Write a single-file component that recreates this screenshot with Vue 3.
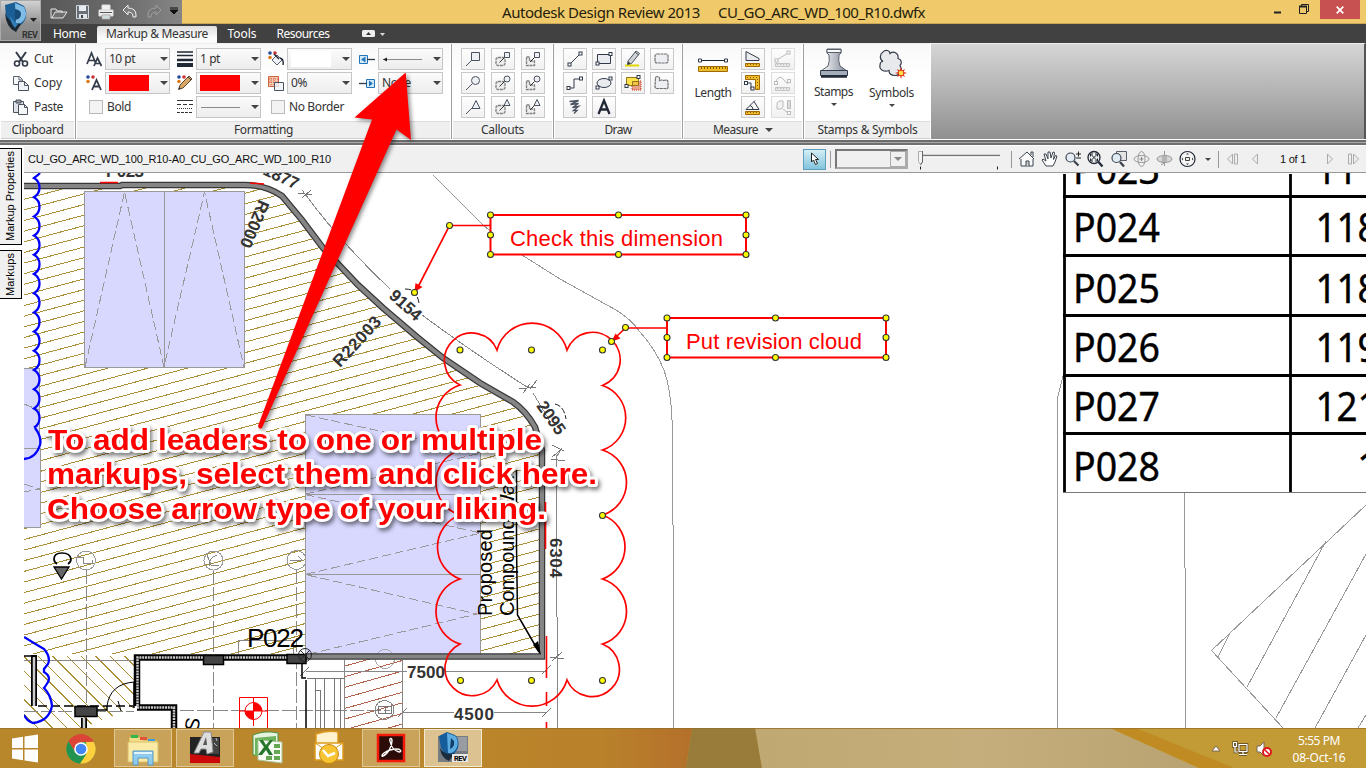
<script setup>
const vFit = {
  mounted(el, { value }) {
    const width = el.getBoundingClientRect().width
    const gaps = Math.max(1, el.textContent.trim().length)
    el.style.letterSpacing = ((value - width) / gaps).toFixed(3) + 'px'
  }
}

const quick = [
  '<path d="M1 5h5l1 2h5v2M1 5v9h12l4-6H5l-3 6" fill="#6f6f6f" stroke="#e4e4e4"/>',
  '<path d="M2.500 1.500h12v13h-12z" fill="#6b6f77" stroke="#d0d6dd"/><path d="M5 2h7v5H5z" fill="#e8edf2"/><path d="M5 10h8v4H5z" fill="#dfe5ea"/><path d="M7 11h2v3H7z" fill="#444"/>',
  '<path d="M4 1h8v5H4zM1 6h14v6H1z" fill="#f0f0f0" stroke="#ddd"/><path d="M2 8h12v1H2z" fill="#555"/><path d="M4 11h8v4H4z" fill="#fff" stroke="#999"/><path d="M5 13h6" stroke="#9bb"/>',
  '<path d="M1 6l5-5v3q8 0 8 7v2h-3q0-5-5-5v3z" fill="#7c7c7c" stroke="#eee"/>',
  '<path d="M15 6l-5-5v3q-8 0-8 7v2h3q0-5 5-5v3z" fill="#777" stroke="#a0a0a0"/>'
]

const clipboard = [
  { label: 'Cut', w: 19, icon: '<path d="M3 1l7 10M13 1L6 11" stroke="#333b4a" stroke-width="2" fill="none"/><circle cx="4" cy="12.500" r="2.500" fill="none" stroke="#333b4a" stroke-width="1.600"/><circle cx="12" cy="12.500" r="2.500" fill="none" stroke="#333b4a" stroke-width="1.600"/>' },
  { label: 'Copy', w: 28, icon: '<path d="M.5 1.500h6l3 3v5h-9z" fill="#f6f8fa" stroke="#5a6270"/><path d="M6 2v3h3" fill="none" stroke="#5a6270"/><path d="M5.500 6.500h6l4 4v5h-10z" fill="#eef1f5" stroke="#4b5361"/><path d="M11.500 6.500v4h4" fill="none" stroke="#4b5361"/>' },
  { label: 'Paste', w: 29, icon: '<path d="M.5 2.500h10v11H.5z" fill="#dfe3e8" stroke="#4b5361"/><path d="M3 1h5v3H3z" fill="#999" stroke="#4b5361"/><path d="M5.500 5.500h6l3 3v7h-9z" fill="#f4f6f8" stroke="#4b5361"/><path d="M11.500 5.500v3h3" fill="none" stroke="#4b5361"/>' }
]

const swatch = '<circle cx="2" cy="2" r="1.800" fill="#214a9a"/><circle cx="7" cy="2" r="1.800" fill="#c33"/><circle cx="2" cy="6.500" r="1.800" fill="#e07818"/>'
const fmtIcons = {
  size: '<path d="M1 13L5.500 2 10 13M2.500 9.500h6M8 15l3.500-8L15.500 15M9 12.500h5" fill="none" stroke="#333b4a" stroke-width="1.700"/>',
  color: swatch + '<path d="M6 15l4.500-10L15 15M7.500 11.500h6" fill="none" stroke="#333b4a" stroke-width="1.800"/>',
  weight: '<path d="M0 1h16M0 4.500h16" stroke="#222936" stroke-width="1.300"/><path d="M0 9h16" stroke="#222936" stroke-width="2.500"/><path d="M0 14h16" stroke="#222936" stroke-width="4"/>',
  pen: swatch + '<path d="M2 14l1-4 9-9 3 3-9 9z" fill="#d9a866" stroke="#5b4632"/><path d="M11 2l3 3" stroke="#444"/><path d="M1 15l1-3 2 2z" fill="#333"/>',
  dash: '<path d="M0 1.500h16" stroke="#333"/><path d="M0 5.500h16" stroke="#333" stroke-dasharray="4 2"/><path d="M0 9.500h16" stroke="#333" stroke-dasharray="1 1"/><path d="M0 13.500h16" stroke="#333" stroke-dasharray="3 1"/>',
  bucket: swatch + '<path d="M4 9l5-5 5 5-5 5z" fill="#edf0f4" stroke="#59606c"/><path d="M6 3l5 5M12 7q4 1 3 7" fill="none" stroke="#222936" stroke-width="1.400"/>',
  opacity: '<path d="M.5 1.500h10v10H.5z" fill="#f6c8b4" stroke="#d0623a"/><path d="M3 1v11M6 1v11M1 4h10M1 7h10" stroke="#d0623a" stroke-dasharray="1 1"/><path d="M6.500 7.500h9v8h-9z" fill="#eef1f6" fill-opacity=".8" stroke="#4b5361"/>',
  start: '<path d="M.5 4.500h8v8h-8z" fill="#d3eafa" stroke="#2474b8"/><path d="M8 8.500h8" stroke="#333b4a" stroke-width="1.300"/><path d="M6.500 5.500v6L2 8.500z" fill="#2474b8"/>',
  end: '<path d="M7.500 4.500h8v8h-8z" fill="#d3eafa" stroke="#2474b8"/><path d="M0 8.500h8" stroke="#333b4a" stroke-width="1.300"/><path d="M10 5.500v6l4-3z" fill="#2474b8"/>'
}
const formatting = [
  { icon: 'size', text: '10 pt', w: 26 }, { icon: 'weight', text: '1 pt', w: 20 }, { icon: 'bucket', fill: 'white' }, { icon: 'start', kind: 'arrow' },
  { icon: 'color', fill: 'red' }, { icon: 'pen', fill: 'red' }, { icon: 'opacity', text: '0%', w: 16 }, { icon: 'end', text: 'None', w: 29 },
  { check: 'Bold', w: 24 }, { icon: 'dash', kind: 'line' }, { check: 'No Border', w: 55 }
]

const heads = [
  ['<path d="M10.500 4.500h8v8h-8z" ', '<path d="M13.500 4.500h5v5h-5z" '],
  ['<circle cx="14.500" cy="8.500" r="4" ', '<circle cx="16" cy="7" r="3" '],
  ['<path d="M15 4.500l4 8h-8z" ', '<path d="M16 3.500l3 6h-6z" ']
]
const ink = 'fill="#eef0f4" stroke="#4b5361"/>'
const callouts = heads.flatMap(([big, small]) => [
  big + ink + '<path d="M5 18l6-6" stroke="#4b5361"/>',
  '<rect x="5" y="9.500" width="9" height="8" rx="2" fill="#eee" stroke="#808080" stroke-width="1.300" stroke-dasharray="3 .7"/>' + small + ink + '<path d="M8.500 14.500l5-5" stroke="#333"/>',
  '<path d="M5.500 9h3v4l5 0v4.500h-8z" fill="#eee" stroke="#808080" stroke-width="1.300" stroke-dasharray="3 .7"/>' + small + ink + '<path d="M9 14l4.500-4.500" stroke="#333"/>'
])
const node = (x, y, c = '#333b4a') => `<rect x="${x - 1.5}" y="${y - 1.5}" width="3" height="3" fill="#fff" stroke="${c}"/>`
const draw = [
  '<path d="M7 16L17 6" stroke="#333b4a"/>' + node(6.5, 16.5) + node(17.5, 5.5),
  '<path d="M5.500 6.500h13v9h-13z" fill="#e9ebef" stroke="#333b4a"/>' + node(5.5, 15.5) + node(18.5, 6),
  '<path d="M4 17.500h14" stroke="#e3d700" stroke-width="2"/><path d="M7 13l8-10 3.500 2.500-8 10-4 1z" fill="#cfd3d6" stroke="#4b5361"/><path d="M14 4l3.500 3" stroke="#4b5361"/><path d="M6.500 16.500l1-3 2 2z" fill="#333"/>',
  '<rect x="5" y="6" width="13" height="9" rx="2" fill="#eceef1" stroke="#707070" stroke-width="1.200" stroke-dasharray="3 .5"/>',
  '<path d="M6 16h5V7h7" fill="none" stroke="#333b4a"/>' + node(5.5, 16) + node(18, 6.5),
  '<ellipse cx="12" cy="11" rx="7" ry="4.500" fill="#e9ebef" stroke="#333b4a"/>' + node(5.5, 15.5) + node(18.5, 6.5),
  '<path d="M11 9h9v9h-9z" fill="#e9a08d" stroke="#c0321c" stroke-dasharray="1 1"/><path d="M5.500 5.500h12v8h-12z" fill="#ffe14a" stroke="#8f7418"/><path d="M11.500 9.500h6v4h-6z" fill="#f8c04a" stroke="#8f7418"/>' + node(5.5, 14) + node(17.5, 5),
  '<path d="M5.500 6q0-1.500 2-1.500t2 2v2q2-1 4 0 4-1 4.500 1v6q-1 2-3 1h-8q-2 0-2-2z" fill="#eceef1" stroke="#707070" stroke-width="1.200" stroke-dasharray="3 .5"/>',
  '<path d="M6.500 5.500l9-1-8 4 8-1-6 4 6-1-5 4 3.500 0-3 3" fill="none" stroke="#4b5361" stroke-width="1.400"/>',
  '<path d="M6.500 18L12 4.500 17.500 18M8.500 13.500h7" fill="none" stroke="#222936" stroke-width="2.300"/>'
]
const ruler = (dim) => `<path d="M4.500 15.500h14v3h-14z" fill="${dim ? '#e6e6e6' : '#f0bd2a'}" stroke="${dim ? '#c4c4c4' : '#a06a00'}"/><path d="M6 16.500h11" stroke="${dim ? '#bbb' : '#8a5a00'}" stroke-dasharray="1 2"/>`
const measure = [
  { svg: '<path d="M5 3.500l13 7v2H5z" fill="#e9ebef" stroke="#333b4a"/>' + ruler() },
  { svg: '<path d="M6 12l11-7" stroke="#bbb"/>' + node(5.5, 12.5, '#bbb') + node(17.5, 4.5, '#bbb') + ruler(1), off: true },
  { svg: '<path d="M4.500 3.500h14v14h-4v-10h-10z" fill="#f0bd2a" stroke="#a06a00"/><path d="M6 5.500h10.500v11" stroke="#8a5a00" stroke-dasharray="1 2" fill="none"/><path d="M5 11h5v6" fill="none" stroke="#333b4a"/>' + node(5, 11) + node(11.5, 16.5) },
  { svg: '<path d="M5 9q4-7 8-1t6 1" fill="none" stroke="#bbb"/>' + node(5, 11, '#bbb') + node(18, 9, '#bbb') + ruler(1), off: true },
  { svg: '<path d="M5 13.500L14 4.500" stroke="#333b4a"/><path d="M5 13.500h13L13 5.500M9 9.500q3 1 3 4" fill="none" stroke="#333b4a"/>' + ruler() },
  { svg: '<path d="M6 7l2-2h4v6l-2 2H6z" fill="#f3f3f3" stroke="#bbb"/><path d="M16.500 4.500h3v8h-3z" fill="#ddd" stroke="#bbb"/><path d="M12 13l5 4" stroke="#bbb"/>' + node(18, 17, '#bbb'), off: true }
]

const nav = [
  '<path d="M1 9l8-7 7 7M3 9v7h12V9M13 5V2h2v5" fill="#fafafa" stroke="#3b4250"/><path d="M8 16v-5h3v5" fill="#ccc" stroke="#3b4250"/>',
  '<path d="M5 16l-4-6 1-1 3 2-2-7 2 0 2 5 0-7 2 0 1 6 2-6 1.500.5-1 7 2-4 1.500.5-2 6-2 4z" fill="#fff" stroke="#3b4250"/>',
  '<circle cx="6.500" cy="7.500" r="4.500" fill="#e4edf3" stroke="#3b4250" stroke-width="1.200"/><path d="M10 11l4.500 4.500" stroke="#3b4250" stroke-width="2.200"/><path d="M12 4h5M14.500 1.500v5M12 8h5" stroke="#222"/>',
  '<circle cx="7" cy="7.500" r="6" fill="#eee" stroke="#222936" stroke-width="1.300"/><path d="M4 4.500l6 6M10 4.500l-6 6M3.500 6.500v-2.500h2.500M10.500 6.500v-2.500H8M3.500 8.500V11H6M10.500 8.500V11H8" stroke="#222936" fill="none"/><path d="M11.500 12l4 4.500" stroke="#222936" stroke-width="2.300"/>',
  '<path d="M6.500 1.500h10v9h-10z" fill="#e4e4e4" stroke="#59606c"/><circle cx="6.500" cy="8" r="4.500" fill="#dfeaf2" stroke="#3b4250" stroke-width="1.200"/><path d="M10 12l4 4.500" stroke="#3b4250" stroke-width="2.300"/>',
  '<ellipse cx="8.500" cy="9" rx="7.500" ry="3.500" fill="none" stroke="#999"/><ellipse cx="8.500" cy="9" rx="3.500" ry="7.500" fill="none" stroke="#999"/><path d="M8.500 7v4M6.500 9h4" stroke="#888"/>',
  '<ellipse cx="8.500" cy="9" rx="7.500" ry="3.500" fill="#d6d6d6" stroke="#999"/><path d="M8.500 1v15M5 11.500l3 1.500-3 2" fill="none" stroke="#999"/><path d="M6 6h5v6H6z" fill="#b5b5b5"/>',
  '<circle cx="8.500" cy="9" r="7.500" fill="#f5f5f5" stroke="#222936" stroke-width="1.200"/><path d="M6.500 7.500h4v3h-4z" fill="#eee" stroke="#444"/><path d="M8.500 3l1.500 1.500h-3zM8.500 15l1.500-1.500h-3zM2.500 9L4 7.500v3zM14.500 9L13 7.500v3z" fill="#444"/>'
]

// Diagonal hatch lines, one per step, running up to the right at 15 degrees.
const slope = Math.tan(Math.PI / 12)
const hatch = Array.from({ length: 56 }, (_, i) => {
  const y = 199.3 + i * 10.63
  return `M24 ${y.toFixed(1)}L564 ${(y - 540 * slope).toFixed(1)}`
}).join('')
const steep = Array.from({ length: 13 }, (_, i) => `M${-40 + i * 14.4} 650l84 84`).join('')
const brick = Array.from({ length: 11 }, (_, i) => `M345 ${666 + i * 10.6}l57-16`).join('')
const squiggle = 'M40 173l-2 2-4 3' + Array.from({ length: 13 }, () => 'q5.500 3 5.500 9.500t-5.500 9.700').join('')
const dots = [[460, 350], [531.5, 350], [602.5, 350], [602.5, 515.5], [460.5, 680.5], [531.5, 680.5], [602.5, 680.5], [611.5, 341.5], [625.5, 327.5],
  [449.5, 225.5], [414.5, 292.5], [490.5, 215], [618.5, 215], [746, 215], [490.5, 235], [746, 235], [490.5, 254.5], [618.5, 254.5], [746, 254.5],
  [667, 318], [775.5, 318], [886, 318], [667, 337.5], [886, 337.5], [667, 357.5], [775.5, 357.5], [886, 357.5]]
const rows = [['P023', '111', 184], ['P024', '118', 242], ['P025', '118', 302.5], ['P026', '119', 362], ['P027', '121', 420.5], ['P028', '', 481]]

const tasks = [
  { svg: '<path d="M3 9.500l11-1.700V19H3zM15.500 7.600L29 5.500V19H15.500zM3 20.500h11v10.700L3 29.500zM15.500 20.500H29V33.500L15.500 31.400z" fill="#fff"/>' },
  { svg: '<circle cx="16" cy="20" r="14.500" fill="#4caf50"/><path d="M3.500 12.500A14.500 14.500 0 0 1 28.600 12.700L16 13z" fill="#db4437"/><path d="M3.500 12.500A14.500 14.500 0 0 1 28.600 12.700H16l-6 10z" fill="#db4437"/><path d="M28.600 12.700A14.500 14.500 0 0 1 15 34.500l7-11-1-10.500z" fill="#fdd13e"/><path d="M3.500 12.500A14.500 14.500 0 0 0 15 34.500l6-9-11-2z" fill="#239450"/><circle cx="16" cy="20" r="6.800" fill="#fff"/><circle cx="16" cy="20" r="5.300" fill="#4285f4"/>' },
  { frame: 1, svg: '<path d="M2 8h12l2 3h14v22H2z" fill="#f2dc86" stroke="#c8a94e"/><path d="M4 6h7v3H4z" fill="#32b64a"/><path d="M13 8h7v3h-7z" fill="#e1543a"/><path d="M21 10h7v2h-7z" fill="#3c9de0"/><path d="M1 13h30v20H1z" fill="#f9eaa5" stroke="#d9bf68"/><path d="M6 36V22h20v14h-5v-7H11v7z" fill="#8fcbed" stroke="#5799c4"/><path d="M7 24h18" stroke="#e2f5ff" stroke-width="2"/>' },
  { frame: 1, svg: '<path d="M1 8h30v26H1z" fill="#222"/><path d="M1 25l30 3v6H1z" fill="#cc0a0a"/><path d="M18 9h12v16H18z" fill="#444"/><path d="M20 10l2 2M25 14l3 3M21 18l3-3M27 9l1 3" stroke="#bbb"/><path d="M5 24L15 3h7l2 20-6 2-1-5h-5l-2 4z" fill="#ddd" stroke="#888"/><path d="M14 16l3-8 1 8z" fill="#555"/>' },
  { svg: '<path d="M2 6q12-5 25-2v22H2z" fill="#e6f3df" stroke="#4a9442"/><path d="M4 9l21-2v20H4z" fill="#6db35c"/><path d="M7 11l24 2v21L7 31z" fill="#f8fcf5" stroke="#a9c79e"/><path d="M23 15h6v4h-6zM23 21h6v4h-6zM23 27h6v4h-6zM15 27h6v4h-6z" fill="#67a653"/><path d="M8 11h4l3 5 4-5h3l-5 7 5 8h-4l-3-5-4 5H7l6-8z" fill="#25762a"/>' },
  { svg: '<path d="M3 5q12-4 22-2v22H3z" fill="#fff2cf" stroke="#dd9a1d" stroke-width="1.500"/><path d="M2 14h28v17H2z" fill="#fff" stroke="#dd9a1d" stroke-width="1.500"/><path d="M2 14l14 9 14-9" fill="none" stroke="#dd9a1d"/><circle cx="16" cy="25" r="9.500" fill="#f8c432" stroke="#c9880e"/><path d="M10 21l5 6 7-3" fill="none" stroke="#fff" stroke-width="2.500"/>' },
  { frame: 1, svg: '<path d="M3 6h26v26H3z" fill="#2b0c08" stroke="#f51b0c" stroke-width="2.500"/><path d="M8 27c5-2 9-10 9-15 0-4-3-3-2 0 1 6 5 10 9 11 3 0 2-3-2-3-5 0-10 2-13 4-3 2-2 4-1 3z" fill="none" stroke="#fff" stroke-width="1.400"/>' },
  { frame: 2, svg: '<path d="M1 7h30v26H1z" fill="#777c82"/><path d="M18 8h12v14H18z" fill="#999da1"/><path d="M2 7l8-4 8 3q5 4 3 13-4 9-12 7L4 19z" fill="#155d9b"/><path d="M10 4l8 3q4 4 2 11-3 7-9 6z" fill="#5caee2"/><path d="M14 9l-1 11q5-2 4-8z" fill="#123f69"/><path d="M3 19q5 8 15 5l-6 8q-8-3-9-13z" fill="#1c2c3c"/><path d="M15 25h16v8H15z" fill="#e8e8e8"/>', rev: 1 }
]
</script>

<template>
  <div class="page">
    <header class="title">
      <div class="appbtn">
        <svg width="41" height="41" viewBox="0 0 41 41"><path d="M5 5l11-3 8 4q4 7 1 14-5 9-15 6L6 17z" fill="#1b5f96"/><path d="M15 3l9 4q4 7 0 13-3 4-8 4z" fill="#7fbde6"/><path d="M15 9v11q6-1 6-6 0-4-6-5z" fill="#184a76"/><path d="M5 13q3 10 16 11l-5 8Q6 28 5 13z" fill="#1b2733"/><path d="M10 15q2 6 8 9l-3 4q-5-5-5-13z" fill="#347fb8"/><path d="M30 18h7l-3.500 4z" fill="#222"/><text x="22" y="37.500" font-family="Roboto" font-size="9" font-weight="700" fill="#333" textLength="16">REV</text></svg>
      </div>
      <div class="quick">
        <svg v-for="(q, i) in quick" :key="i" width="18" height="16" viewBox="0 0 18 16" v-html="q" />
        <svg width="8" height="8" viewBox="0 0 8 8"><path d="M0 1h8M0 3h8l-4 4z" stroke="#111" fill="#111"/></svg>
      </div>
      <div class="caption">
        <span v-fit="198">Autodesk Design Review 2013</span>
        <span v-fit="207">CU_GO_ARC_WD_100_R10.dwfx</span>
      </div>
      <div class="winbtns">
        <svg width="70" height="20" viewBox="0 0 70 20"><path d="M4 12.500h7" stroke="#222" stroke-width="2"/><path d="M29.500 6.500h7v7h-7zM31.500 6V4.500h7v7H37" fill="none" stroke="#222"/><path d="M29 6.500h8" stroke="#222" stroke-width="2"/></svg>
        <div class="close"><svg width="8" height="8" viewBox="0 0 8 8"><path d="M.7.700l6.600 6.600M7.300.7L.7 7.300" stroke="#fff" stroke-width="1.700"/></svg></div>
      </div>
    </header>
    <nav class="tabs">
      <span v-fit="33" class="t1">Home</span>
      <div class="active"><span v-fit="102">Markup &amp; Measure</span></div>
      <span v-fit="29" class="t3">Tools</span>
      <span v-fit="53" class="t4">Resources</span>
      <svg width="24" height="8" viewBox="0 0 24 8"><rect width="13" height="7" rx="1.500" fill="#eee"/><path d="M4 5l2.500-3L9 5z" fill="#333"/><path d="M18 3h5l-2.500 3z" fill="#ddd"/></svg>
    </nav>
    <section class="ribbon">
      <div class="panel clip">
        <div class="body">
          <div v-for="c in clipboard" :key="c.label" class="cliprow"><svg width="16" height="16" viewBox="0 0 16 16" v-html="c.icon" /><span v-fit="c.w">{{ c.label }}</span></div>
        </div>
        <footer><span v-fit="52">Clipboard</span></footer>
      </div>
      <div class="panel fmt">
        <div class="body">
          <div v-for="(f, i) in formatting" :key="i" class="cell">
            <template v-if="f.check"><i class="box" /><span v-fit="f.w">{{ f.check }}</span></template>
            <template v-else>
              <svg width="16" height="16" viewBox="0 0 16 16" v-html="fmtIcons[f.icon]" />
              <div class="combo">
                <span v-if="f.text" v-fit="f.w">{{ f.text }}</span>
                <i v-if="f.fill" class="fill" :class="f.fill" />
                <svg v-if="f.kind" width="42" height="9" viewBox="0 0 42 9"><path d="M1 4.500h39" stroke="#8a8a8a"/><path v-if="f.kind === 'arrow'" d="M1 4.500l4-2v4z" fill="#222"/></svg>
                <b class="tri" />
              </div>
            </template>
          </div>
        </div>
        <footer><span v-fit="59">Formatting</span></footer>
      </div>
      <div class="panel call">
        <div class="body grid3"><button v-for="(c, i) in callouts" :key="i"><svg width="22" height="20" viewBox="1 1 22 20" v-html="c" /></button></div>
        <footer><span v-fit="43">Callouts</span></footer>
      </div>
      <div class="panel drw">
        <div class="body grid4"><button v-for="(c, i) in draw" :key="i"><svg width="22" height="20" viewBox="1 1 22 20" v-html="c" /></button></div>
        <footer><span v-fit="27">Draw</span></footer>
      </div>
      <div class="panel meas">
        <div class="body split">
          <div class="big len"><svg width="30" height="32" viewBox="0 0 30 32"><path d="M2 12.500h26" stroke="#222936"/><path d="M.5 11h3v3h-3zM26.500 11h3v3h-3z" fill="#fff" stroke="#333b4a"/><path d="M.5 18.500h29v5H.5z" fill="#f0bd2a" stroke="#a06a00"/><path d="M3 20h25" stroke="#8a5a00" stroke-width="2" stroke-dasharray="1 2"/></svg><span v-fit="37">Length</span></div>
          <div class="grid2"><button v-for="(m, i) in measure" :key="i" :class="{ off: m.off }"><svg width="22" height="20" viewBox="1 1 22 20" v-html="m.svg" /></button></div>
        </div>
        <footer><span v-fit="45">Measure</span><b class="tri" /></footer>
      </div>
      <div class="panel stm">
        <div class="body split">
          <div class="big"><svg width="32" height="36" viewBox="0 0 32 36"><defs><linearGradient id="metal"><stop stop-color="#fff"/><stop offset="1" stop-color="#7d8595"/></linearGradient></defs><path d="M9 5h14v4l-2 2q-1 6 1 11l7 5v5H3v-5l7-5q2-5 1-11L9 9z" fill="url(#metal)" stroke="#59606c"/><path d="M9 5.500h14v3H9z" fill="#fafafa" stroke="#59606c"/><path d="M2.500 26.500h27v5h-27z" fill="#a6adba" stroke="#333b4a"/><path d="M3 32.500h26" stroke="#222936" stroke-width="2.500"/></svg><span v-fit="39">Stamps</span><b class="tri sm" /></div>
          <div class="big sym"><svg width="36" height="36" viewBox="0 0 36 36"><path d="M9 8c2-2.500 7-2 7 1.500 4-3 9 0 8 5 4 1 4 5 2 7 3 5 0 10-5 10-4 0-6-2-6-5-5 2-10-1-9-5 0-3 1-4 3-4-4-2-3-8 0-9.500z" fill="#e7e9ed" stroke="#333b4a" stroke-width="1.200"/><path d="M27 23l1 3.500 3-1.500-1.500 3 3.500 1-3.500 1 1.500 3-3-1.500-1 3.500-1-3.500-3 1.500 1.500-3-3.500-1 3.500-1-1.500-3 3 1.500z" fill="#e02608"/><circle cx="27" cy="29" r="2.300" fill="#ffe24a"/></svg><span v-fit="45">Symbols</span><b class="tri sm" /></div>
        </div>
        <footer><span v-fit="100">Stamps &amp; Symbols</span></footer>
      </div>
    </section>
    <div class="rule" />
    <main class="work">
      <aside>
        <div class="vtab a"><svg width="19" height="94" viewBox="0 0 19 94"><text transform="translate(14 92) rotate(-90)" textLength="90">Markup Properties</text></svg></div>
        <div class="vtab b"><svg width="19" height="47" viewBox="0 0 19 47"><text transform="translate(14 45) rotate(-90)" textLength="43">Markups</text></svg></div>
      </aside>
      <div class="doc">
        <div class="docbar">
          <span v-fit="303" class="docname">CU_GO_ARC_WD_100_R10-A0_CU_GO_ARC_WD_100_R10</span>
          <div class="ptr"><svg width="10" height="14" viewBox="0 0 10 14"><path d="M1.500 1v9l2-2 2 4.500 2-1L5.500 7.500h3z" fill="#fff" stroke="#222"/></svg></div>
          <i class="sep" />
          <div class="select"><div><b class="tri gr" /></div></div>
          <svg class="slider" width="84" height="22" viewBox="0 0 84 22"><path d="M3 7.500h80" stroke="#777" stroke-width="1.500"/><path d="M3 9h80" stroke="#fff"/><path d="M1.500 3.500h4v10l-2 3-2-3z" fill="#f6f6f6" stroke="#aaa"/><path d="M5.500 3v11l-2 3" fill="none" stroke="#666"/><path d="M3.500 18.500v3M80.500 18.500v3" stroke="#222"/></svg>
          <i class="sep s2" />
          <div class="nav"><svg v-for="(n, i) in nav" :key="i" width="18" height="18" viewBox="0 0 18 18" v-html="n" /></div>
          <b class="tri sm dk" />
          <i class="sep s3" />
          <svg class="pg" width="34" height="12" viewBox="0 0 34 12"><path d="M6.500 1v10l-5-5zM8.500 1h3v10h-3zM31.500 1v10l-5-5z" fill="#eee" stroke="#aaa"/></svg>
          <span v-fit="26" class="of">1 of 1</span>
          <svg class="pg" width="34" height="12" viewBox="0 0 34 12"><path d="M1.500 1v10l5-5zM22.500 1h3v10h-3zM27.500 1v10l5-5z" fill="#eee" stroke="#aaa"/></svg>
        </div>
        <svg class="plan" width="1342" height="555" viewBox="24 173 1342 555">
          <defs>
            <clipPath id="yard"><path d="M24 188H245q22-1 38 10L306 228 360 289 383 311 417 340 443 361 480 386 512 405 532 426 540 452V654H24z"/></clipPath>
            <clipPath id="porch"><path d="M24 656H134V708L82 728H24z"/></clipPath>
            <clipPath id="strip"><path d="M345 659h57v70h-57z"/></clipPath>
          </defs>
          <g shape-rendering="crispEdges" fill="none">
            <path clip-path="url(#yard)" :d="hatch" stroke="#ac9038"/>
            <path clip-path="url(#porch)" :d="steep" stroke="#ac9038"/>
            <path clip-path="url(#strip)" :d="brick" stroke="#b5654d"/>
            <path d="M84.500 191.500h160v176h-160zM24 368.500h15v80h1v79H24M305.500 414.500h175V654h-175z" fill="#d8d8ff" stroke="#999"/>
            <path d="M164.500 192v175M305 494.500h176M305 574.500h176M24 448.500h15" stroke="#999"/>
            <path d="M85 367L124.500 192 164 367 204.500 192 244 367M306 415l175 38-175 41M305 494.500L481 533 305 574.500 477 614 305 655M24 404l15 6M24 484l16 5-16 3" stroke="#999" stroke-dasharray="9 4"/>
            <path d="M433 175L482 224Q500 241 522 255L560 279 616 310Q632 320 640 332 656 350 664 370 671 390 672 420V525M673 525V728M1063 376l-5 20-1 15V728M1184.500 493V568M1185.500 568V728M1366 505L1211.500 650.500 1283 728M1230 633l-12 24M1326 541L1247 687M1366 554L1276 718M1366 635L1315 728M1366 715l-8 13" stroke="#999"/>
            <path d="M302 190Q340 242 390 289M422 315Q472 352 527 387M533 393l18 30M562 448L556 458M556 455V617M557 617V728M306 671H407M445 671H547M402 713L455 712M494 712H547M238 654V640h55v14M402 660V728M344.500 660V728M24 660H134M306 672" stroke="#888"/>
            <path d="M86 570V728M213.500 570V728M296.500 570V728M180 710.500H390M24 711H134" stroke="#888" stroke-dasharray="14 3"/>
            <path d="M298 193l14 2M302 198l9-8M519 389l17-2M523 393l7-9M530 389l7-9M552 457l10-8M551 459l14 2M552 445l12 6M550 657l14 2M552 661l10-9M542 674l9-9M542 717l9-9M398 717l9-9M300 676l9-9" stroke="#777"/>
            <path d="M307 678h38M315 678v50M324.500 678v50M334.500 678v50M340 678v50M316 690h4v38" stroke="#777"/>
            <circle cx="86" cy="560.500" r="9.500" stroke="#999"/><circle cx="213.500" cy="560.500" r="9.500" stroke="#999"/><circle cx="296.500" cy="560" r="9.500" stroke="#999"/>
            <circle cx="385" cy="659" r="9.500" stroke="#aaa"/><circle cx="384.500" cy="710" r="9.500" stroke="#888"/><path d="M378.500 706h13v7h-13zM385 706v7" stroke="#777"/>
            <path d="M209 566q0-8 8-11M207 555l4 10h8M76 557h7v6h9v-3M290 560h12l-4-4" stroke="#888"/>
          </g>
          <g fill="none">
            <path d="M24 186H120L122 185H245Q266 185 282 196L302 220 323 248 358 285 383 308 417 337 443 358 480 383 513 402Q526 411 535 427L542 450V656.500H305" stroke="#383838" stroke-width="6.500"/>
            <path d="M24 186H120L122 185H245Q266 185 282 196L302 220 323 248 358 285 383 308 417 337 443 358 480 383 513 402Q526 411 535 427L542 450V656.500H305" stroke="#858585" stroke-width="4"/>
            <path d="M100 182.500h18M250 183l14 1M545.500 502v47M546.500 636v42M546.500 692v14M546.500 722v6" stroke="red" stroke-width="1.600"/>
            <path d="M137 706V657.500H302M137 707.500H174V728" stroke="#000" stroke-width="6.500"/>
            <path d="M137.500 706V657.500H302M137 707.500H174V728" stroke="#ccc" stroke-width="2.500" stroke-dasharray="2 .8"/>
            <path d="M34 655V706M84 718V728" stroke="#000" stroke-width="6"/><path d="M34 657V706M84 718V728" stroke="#ccc" stroke-width="2.500"/>
            <path d="M24 656h12M38 706H134" stroke="#000" stroke-width="1.500" stroke-dasharray="9 4"/>
            <path d="M203.500 655.500h20v9h-20zM287 654.500h19v9h-19zM75 706.500h22v10H75z" fill="#444" stroke="#000" stroke-width="1.500"/>
            <path d="M97 710h10v-4M134 682v26M302 664v14h4M306 680V728" stroke="#000" stroke-width="1.500"/><path d="M107 706q3-22 27-24M118 701l3 10" stroke="#000"/>
            <circle cx="305" cy="655" r="6.500" stroke="#222"/><path d="M300 650l10 10M310 650l-10 10" stroke="#222"/>
            <path d="M239.500 697.500h28v34h-28z" stroke="red"/><circle cx="253.500" cy="711" r="8.500" fill="#fff" stroke="red"/><path d="M253.500 711v-8.500a8.500 8.500 0 0 1 8.500 8.500zM253.500 711v8.500a8.500 8.500 0 0 1-8.500-8.500z" fill="red"/><path d="M240 711h27M253.500 698v28" stroke="red"/>
            <path d="M57 564q-3-2-3-5 0-6 8-6t9 6q0 3-3 5" stroke="#000" stroke-width="1.700"/><path d="M54 567h15l-7.500 12z" fill="#666" stroke="#000" stroke-width="1.300"/>
            <path d="M516.500 470V545L517.500 615 539 652" stroke="#000" stroke-width="1.500"/><path d="M541 655l-8-10 5-4z" fill="#000"/>
            <path :d="squiggle" stroke="#00f" stroke-width="2.300"/><path d="M35 428q7 9 5 17-4 13-16 14M24 637q11 7 20 12 7 8 4 15l-4 5 0 3q7 4 4 10-3 5-4 6 7 7 8 18-3 15-19 17-6-2-9-8" stroke="#00f" stroke-width="2.300"/>
            <path d="M497 350A36.200 36.200 0 0 1 567 350A27.500 27.500 0 1 1 602.500 385.500A34 34 0 0 1 602.500 450A34 34 0 0 1 602.500 515A34 34 0 0 1 602.500 579A34 34 0 0 1 602.500 644A27.300 27.300 0 1 1 567 680A36.500 36.500 0 0 1 497 680A27.300 27.300 0 1 1 460 644A34 34 0 0 1 460 579A34 34 0 0 1 460 515A34 34 0 0 1 460 450A34 34 0 0 1 460 385A27.300 27.300 0 1 1 497 350z" stroke="red" stroke-width="1.700"/>
          </g>
          <g class="dim">
            <text transform="translate(262 174) rotate(25)" textLength="37">1877</text><text x="106" y="177" textLength="38">P023</text>
            <text transform="translate(259 199) rotate(113)" textLength="50">R2000</text>
            <text transform="translate(388 297) rotate(42)" textLength="37">9154</text>
            <text transform="translate(340 368) rotate(-47)" textLength="62">R22003</text>
            <text transform="translate(536 406) rotate(55)" textLength="37">2095</text>
            <text transform="translate(549.500 538) rotate(90)" textLength="40">6304</text>
            <text x="407" y="677.500" textLength="38">7500</text><text x="454" y="719.500" textLength="40">4500</text>
          </g>
          <g class="note">
            <text x="247" y="647" font-size="26" textLength="57">P022</text>
            <text transform="translate(492 616) rotate(-90)" font-size="20" textLength="87">Proposed</text>
            <text transform="translate(513.500 616) rotate(-90)" font-size="20" textLength="141">Compound Wall</text>
            <text transform="translate(198 732) rotate(-80)" font-size="20">S</text>
          </g>
          <path d="M1063 174h310v319h-310z" fill="#fff"/>
          <path d="M1064.500 174V493M1290.500 174V493M1063 196.500H1366M1063 255.500H1366M1063 315.500H1366M1063 375.500H1366M1063 433.500H1366" stroke="#000" stroke-width="2.800"/>
          <path d="M1063 492.500h303" stroke="#777"/>
          <g class="tbl"><template v-for="r in rows" :key="r[0]"><text x="1073" :y="r[2]" textLength="87" lengthAdjust="spacingAndGlyphs">{{ r[0] }}</text><text v-if="r[1]" x="1315.500" :y="r[2]" textLength="63" lengthAdjust="spacingAndGlyphs">{{ r[1] }}</text></template><text x="1357" y="481">1</text></g>
          <g fill="#fff" stroke="red" stroke-width="2"><path d="M490.500 215H746V254.500H490.500zM667 318H886V357.500H667z"/><path d="M490 225.500H449.500L418 287M667 328H625.500L617 336" fill="none" stroke-width="1.700"/><path d="M414.500 292l1-9 7 4zM611.500 341.500l4-8 5 5z" fill="red" stroke="none"/></g>
          <g class="mark"><text x="510" y="246" textLength="213">Check this dimension</text><text x="686" y="349" textLength="176">Put revision cloud</text></g>
          <path d="M405 289q8 0 10 4 3 4 4 10M555 404q9 2 11 15" fill="none" stroke="#222" stroke-dasharray="6 2"/>
          <circle v-for="(d, i) in dots" :key="i" :cx="d[0]" :cy="d[1]" r="3" fill="#ff0" stroke="#333" stroke-width="1.100"/>
        </svg>
      </div>
    </main>
    <footer class="taskbar">
      <svg class="wall" width="1366" height="40" viewBox="0 0 1366 40"><defs><linearGradient id="tb"><stop stop-color="#b8862b"/><stop offset=".6" stop-color="#bb872c"/><stop offset=".87" stop-color="#b9812a"/><stop offset="1" stop-color="#b4702b"/></linearGradient><linearGradient id="tb2"><stop stop-color="#bfa871"/><stop offset=".5" stop-color="#c5ae7b"/><stop offset="1" stop-color="#b9a372"/></linearGradient></defs><path d="M0 0h1366v40H0z" fill="#c29a36"/><path d="M0 0h692l-6 40H0z" fill="url(#tb)"/><path d="M692 0h64l6 40h-76z" fill="#9a7c3a"/><path d="M755 0h355l88 40H762z" fill="url(#tb2)"/><path d="M1110 0h26l98 40h-34z" fill="#c08b22"/><path d="M0 .5h1366" stroke="#95712a" stroke-opacity=".8"/></svg>
      <div class="tasks">
        <div v-for="(t, i) in tasks" :key="i" class="task" :class="['f' + (t.frame || 0)]"><svg width="32" height="38" viewBox="0 0 32 38"><g v-html="t.svg" /><text v-if="t.rev" x="17" y="32" font-family="Roboto" font-size="7.500" font-weight="700" textLength="13">REV</text></svg></div>
      </div>
      <svg class="tray" width="64" height="20" viewBox="0 0 64 20"><path d="M4 12l4-5 4 5z" fill="#fff" stroke="#765"/><path d="M31 5.500h8v7h-8zM35 12.500v3M31 15.500h8M25.500 3.500h3v4h-3zM27 7v6h3" fill="none" stroke="#5b4720" stroke-width="2.600"/><path d="M31 5.500h8v7h-8zM35 12.500v3M31 15.500h8M25.500 3.500h3v4h-3zM27 7v6h3" fill="none" stroke="#fff" stroke-width="1.200"/><path d="M49 7h3l4-4v14l-4-4h-3z" fill="#fff" stroke="#765"/><circle cx="59" cy="13" r="4" fill="#fff" stroke="#df1818" stroke-width="2"/><path d="M56 10l6 6" stroke="#df1818" stroke-width="1.600"/></svg>
      <div class="clock"><span v-fit="42">5:55 PM</span><span v-fit="53">08-Oct-16</span></div>
    </footer>
    <svg class="overlay" width="1366" height="768" viewBox="0 0 1366 768">
      <path class="shade" d="M405.700 72.500L411 140 396.500 129.500 262 428Q259 430 258 426L372 119.500 354.500 117.500z" fill="red"/>
      <g class="tip"><text x="48" y="450" textLength="494" lengthAdjust="spacingAndGlyphs">To add leaders to one or multiple</text><text x="47" y="484" textLength="550" lengthAdjust="spacingAndGlyphs">markups, select them and click here.</text><text x="47" y="518.500" textLength="499" lengthAdjust="spacingAndGlyphs">Choose arrow type of your liking.</text></g>
    </svg>
  </div>
</template>

<style>
body { overflow: hidden; background: #fff; }
</style>
<style scoped>
.page { position: relative; width: 1366px; height: 768px; display: flex; flex-direction: column; overflow: hidden; font: 12px/16px "Noto Sans", "Open Sans", sans-serif; color: #333; background: #fff; }
* { box-sizing: border-box; }
svg { display: block; flex: none; }
span { display: inline-block; white-space: nowrap; }
.title { height: 24px; flex: none; background: #f0ca6a; border-bottom: 1px solid #c9a85a; display: flex; position: relative; }
.appbtn { position: absolute; left: 0; top: 0; width: 41px; height: 41px; background: linear-gradient(#d2d2d2, #8f8f8f 60%, #858585); border: 1px solid #aaa; z-index: 2; }
.appbtn svg { margin: -1px; }
.quick { width: 182px; height: 24px; padding: 4px 0 0 50px; background: linear-gradient(90deg, #4d4d4d, #686868 60%, #858585); display: flex; gap: 6px; }
.quick svg:last-child { margin-top: 3px; }
.caption { display: flex; gap: 18px; padding-left: 320px; font-size: 15px; line-height: 24px; color: #241d0c; width: 1088px; }
.winbtns { display: flex; width: 93px; }
.winbtns > svg { margin-right: -20px; }
.close { width: 40px; height: 19px; background: #c75050; display: flex; align-items: center; justify-content: center; margin-right: 3px; }
.tabs { height: 19px; flex: none; background: #414141; color: #fff; display: flex; line-height: 20px; font-size: 12px; padding-left: 53px; }
.active { background: linear-gradient(#dedede, #fbfbfb 70%); color: #333; width: 120px; padding-left: 9px; margin: 2px 10.500px 0 11px; line-height: 16px; border-radius: 2px 2px 0 0; }
.t3 { margin-right: 20px; }
.t4 { margin-right: 32px; }
.tabs svg { margin-top: 6px; }
.ribbon { height: 96px; flex: none; display: flex; background: linear-gradient(#d6d6d6, #909090); border-right: 2px solid #555; border-top: 1px solid #eee; }
.panel { display: flex; flex-direction: column; background: #fff; border-right: 1px solid #a0a0a0; padding-right: 1px; }
.body { height: 77px; padding-top: 4px; background: linear-gradient(#f8f8f8, #fff 40%); }
.panel > footer { height: 18px; background: #efefef; border-top: 1px solid #dcdcdc; border-bottom: 1px solid #ccc; display: flex; justify-content: center; align-items: center; gap: 7px; margin-left: 1px; line-height: 16px; }
.clip { width: 76px; } .fmt { width: 376px; } .call { width: 102px; } .drw { width: 129px; } .meas { width: 121px; } .stm { width: 127px; border: 0; }
.clip .body, .fmt .body { padding-top: 3px; }
.cliprow { height: 24px; display: flex; align-items: center; padding-left: 13px; gap: 5px; }
.fmt .body { display: grid; grid-template-columns: repeat(4, 91px); grid-auto-rows: 24px; padding-left: 10px; }
.cell { display: flex; align-items: center; gap: 3px; }
.box { width: 14px; height: 14px; border: 1px solid #bbb; background: #f3f3f3; margin: 0 1px 0 3px; }
.combo { width: 65px; height: 22px; border: 1px solid #c6c6c6; background: linear-gradient(#fbfbfb, #ededed); padding: 0 2px 0 3px; display: flex; align-items: center; }
.combo .tri { margin-left: auto; margin-right: -1px; }
.tri { width: 0; height: 0; border: 4px solid transparent; border-top-color: #444; border-bottom: 0; flex: none; }
.tri.sm { border-width: 3px 3px 0; }
.tri.gr { border-top-color: #888; }
.fill { width: 40px; height: 16px; background: #fff; } .fill.red { background: #f00; }
button { width: 24px; height: 22px; padding: 0; border: 1px solid #c9c9c9; background: linear-gradient(#fefefe, #f1f1f1); }
.off { border-color: #dedede; }
.grid3, .grid4, .grid2 { display: grid; gap: 2px 6px; grid-template-columns: repeat(3, 24px); grid-auto-rows: 22px; align-content: start; }
.grid3 { padding-left: 9px; }
.grid4 { padding-left: 9px; grid-template-columns: repeat(4, 24px); column-gap: 5px; }
.grid2 { grid-template-columns: repeat(2, 24px); }
.split { display: flex; }
.big { display: flex; flex-direction: column; align-items: center; }
.len { width: 58px; padding-left: 2px; }
.len span { margin-top: 5px; }
.stm .big { width: 59px; padding-top: 0; }
.stm .big svg { margin-top: -4px; }
.stm .big span { margin: 4px 0 3px; }
.stm .sym { width: 57px; }
.stm .sym span { margin-top: 5px; }
.rule { height: 7px; flex: none; background: linear-gradient(#fff 0 1px, #6b6b6b 1px 3px, #a8a8a8 3px 4px, #707070 4px 6px, #fff 6px); }
.work { height: 582px; flex: none; display: flex; }
aside { width: 24px; flex: none; }
.vtab { width: 22px; border: 1px solid #000; border-left: 0; background: #f0f0f0; font: 11px "Liberation Sans", sans-serif; }
.vtab.a { height: 97px; margin-top: 2px; } .vtab.b { height: 49px; margin-top: 5px; }
.doc { width: 1342px; display: flex; flex-direction: column; }
.docbar { height: 27px; flex: none; background: #f0f0f0; border-bottom: 1px solid #999; display: flex; align-items: center; padding-left: 4px; color: #111; }
.docname, .of { font: 11px/16px "Liberation Sans", sans-serif; }
.docname { margin-right: 472px; }
.ptr { width: 23px; height: 21px; border: 1px solid #5d9fbd; background: linear-gradient(#d4edf5, #83c4dc); display: flex; align-items: center; justify-content: center; flex: none; }
.sep { width: 1px; height: 17px; background: #999; margin: 0 4px; flex: none; }
.select { width: 73px; height: 20px; border: 2px solid #8a8a8a; border-color: #777 #aaa #aaa #777; display: flex; justify-content: flex-end; flex: none; }
.select div { width: 16px; border: 1px solid #aaa; display: flex; align-items: center; justify-content: center; }
.slider { margin-left: 9px; }
.s2 { margin: 0 6px 0 10px; }
.nav { display: flex; gap: 5px; }
.dk { margin-left: 8px; }
.s3 { margin: 0 7px 0 7px; }
.of { margin: 0 20px 0 20px; }
.dim text { font: 700 17px "Liberation Sans", sans-serif; fill: #333; }
.note text { font-family: "Liberation Sans", sans-serif; fill: #000; }
.tbl text { font: 40px "Noto Sans", sans-serif; fill: #000; stroke: #000; stroke-width: .4px; }
.mark text { font: 22px "Liberation Sans", sans-serif; fill: red; }
.taskbar { height: 40px; flex: none; position: relative; display: flex; color: #fff; }
.wall { position: absolute; left: 0; top: 0; }
.tasks, .tray, .clock { position: relative; }
.tasks { display: flex; gap: 4px; width: 1208px; margin-left: -10px; }
.task { width: 58px; height: 38px; margin-top: 1px; display: flex; justify-content: center; border: 1px solid transparent; }
.task svg { margin-top: -1px; }
.task:nth-child(1) { margin-left: 6px; }
.task:nth-child(2) { margin-left: -6px; }
.f1 { background: rgba(225, 205, 160, .4); border-color: rgba(240, 225, 190, .6); }
.f2 { background: rgba(235, 220, 190, .7); border-color: #f3ead4; }
.tray { margin-top: 11px; margin-left: 10px; }
.clock { font-size: 12px; line-height: 17px; padding-top: 4px; width: 80px; margin-left: 7px; display: flex; flex-direction: column; align-items: center; }
.overlay { position: absolute; left: 0; top: 0; z-index: 5; pointer-events: none; }
.shade { filter: drop-shadow(2px 2px 2px rgba(0, 0, 0, .45)); }
.tip { filter: drop-shadow(2px 3px 2px rgba(0, 0, 0, .5)); }
.tip text { font: 700 30px "Liberation Sans", sans-serif; fill: red; stroke: #fff; stroke-width: 6px; stroke-linejoin: round; paint-order: stroke; }
</style>
